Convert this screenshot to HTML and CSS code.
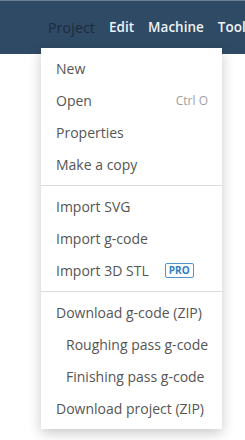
FILE: index.html
```html
<!DOCTYPE html>
<html lang="en">
<head>
    <meta charset="UTF-8">
    <title>Project menu</title>
    <link rel="stylesheet" href="styles.css">
</head>
<body>

    <!-- top bar -->
    <div id="top-bar">
        <div id="top-menu">
            <span class="top-item active">Project</span>
            <span class="top-item">Edit</span>
            <span class="top-item">Machine</span>
            <span class="top-item">Tool</span>
        </div>
    </div>

    <!-- project dropdown -->
    <div id="project-menu">
        <div class="menu-group">
            <div class="menu-item">New</div>
            <div class="menu-item">Open <span class="shortcut">Ctrl O</span></div>
            <div class="menu-item">Properties</div>
            <div class="menu-item">Make a copy</div>
        </div>
        <div class="menu-group">
            <div class="menu-item">Import SVG</div>
            <div class="menu-item">Import g-code</div>
            <div class="menu-item">Import 3D STL <span class="pro-badge">PRO</span></div>
        </div>
        <div class="menu-group">
            <div class="menu-item">Download g-code (ZIP)</div>
            <div class="menu-item sub">Roughing pass g-code</div>
            <div class="menu-item sub">Finishing pass g-code</div>
            <div class="menu-item">Download project (ZIP)</div>
        </div>
    </div>

</body>
</html>
```

FILE: styles.css
```css
body {
    margin: 0;
    font-family: "Open Sans", "Liberation Sans", sans-serif;
    background-color: #ffffff;
    width: 245px;
    height: 440px;
    overflow: hidden;
    position: relative;
}

/* top bar */
#top-bar {
    height: 54px;
    background-color: #2f4a64;
    border-top: 1px solid #6d8196;
    box-sizing: border-box;
    display: flex;
    align-items: center;
    overflow: hidden;
}
#top-menu {
    display: flex;
    gap: 14px;
    padding-left: 48px;
    white-space: nowrap;
}
.top-item {
    color: #eef2f6;
    font-size: 13.5px;
    font-weight: 600;
}
.top-item.active {
    color: #1b2b3d;
    font-size: 14px;
    font-weight: 400;
    letter-spacing: 0.2px;
}

/* dropdown */
#project-menu {
    position: absolute;
    top: 48px;
    left: 41px;
    width: 181px;
    background-color: white;
    box-shadow: 0px 4px 12px rgba(0, 0, 0, 0.22);
}
.menu-group {
    padding: 4px 0 5px 0;
    border-bottom: 1px solid #dcdcdc;
}
.menu-group:last-child {
    border-bottom: none;
}
.menu-item {
    height: 32px;
    display: flex;
    align-items: center;
    padding: 0 14px 0 15px;
    font-size: 14px;
    color: #555555;
    white-space: nowrap;
}
.menu-item.sub {
    padding-left: 25px;
}
.shortcut {
    margin-left: auto;
    font-size: 12px;
    color: #a0a0a0;
}
.pro-badge {
    margin-left: 16px;
    width: 27px;
    height: 13px;
    line-height: 13px;
    text-align: center;
    font-size: 10px;
    font-weight: 700;
    color: #2f7fbf;
    border: 1px solid #4f95cc;
    border-radius: 2px;
}
```
